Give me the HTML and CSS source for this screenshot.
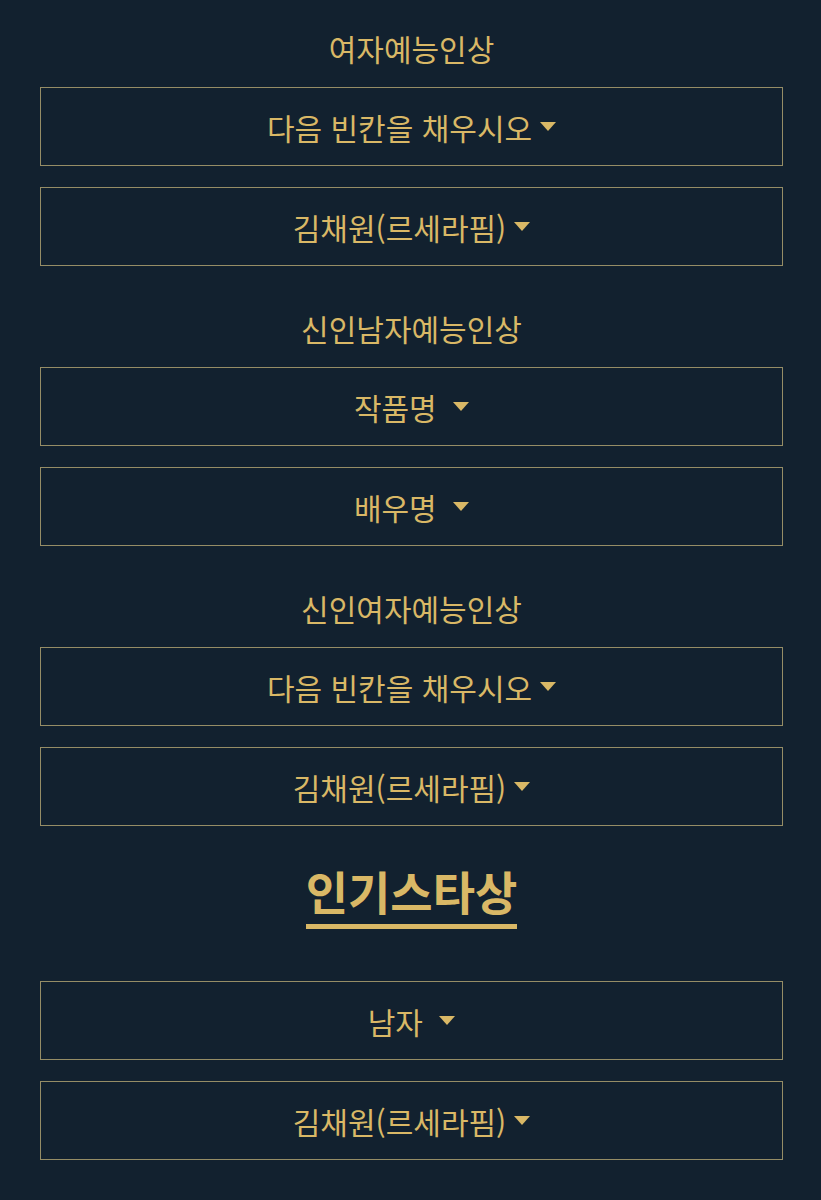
FILE: index.html
```html
<!DOCTYPE html>
<html lang="ko">
<head>
<meta charset="utf-8">
<link rel="stylesheet" href="styles.css">
</head>
<body>
<main class="page">
  <section class="group">
    <h3 class="label">여자예능인상</h3>
    <div class="select"><span class="val">다음 빈칸을 채우시오</span><span class="caret"></span></div>
    <div class="select"><span class="val">김채원(르세라핌)</span><span class="caret"></span></div>
  </section>
  <section class="group">
    <h3 class="label">신인남자예능인상</h3>
    <div class="select"><span class="val">작품명&nbsp;</span><span class="caret"></span></div>
    <div class="select"><span class="val">배우명&nbsp;</span><span class="caret"></span></div>
  </section>
  <section class="group">
    <h3 class="label">신인여자예능인상</h3>
    <div class="select"><span class="val">다음 빈칸을 채우시오</span><span class="caret"></span></div>
    <div class="select"><span class="val">김채원(르세라핌)</span><span class="caret"></span></div>
  </section>
  <section class="group">
    <h2 class="heading"><span class="ul">인기스타상</span></h2>
    <div class="select"><span class="val">남자&nbsp;</span><span class="caret"></span></div>
    <div class="select"><span class="val">김채원(르세라핌)</span><span class="caret"></span></div>
  </section>
</main>
</body>
</html>
```

FILE: styles.css
```css
html, body {
  margin: 0;
  padding: 0;
  background: #12212f;
}
body {
  font-family: "Noto Sans CJK KR", "Noto Sans", sans-serif;
  color: #d9b866;
}
.page {
  padding: 28px 38px 40px 40px;
}
.group {
  display: flex;
  flex-direction: column;
  gap: 21px;
  margin-bottom: 42px;
}
.label {
  margin: 0 0 -2px;
  font-size: 30px;
  font-weight: 400;
  line-height: 40px;
  text-align: center;
}
.select {
  height: 77px;
  border: 1px solid #958d66;
  display: flex;
  align-items: center;
  justify-content: center;
  font-size: 30px;
  line-height: 1;
}
.val {
  display: inline-block;
}
.caret {
  display: inline-block;
  width: 0;
  height: 0;
  margin-left: 8px;
  border-left: 8px solid transparent;
  border-right: 8px solid transparent;
  border-top: 9px solid #d9b866;
}
.heading {
  display: flex;
  justify-content: center;
  margin: 0 0 31px;
  font-size: 46px;
  font-weight: 700;
  line-height: 44px;
}
.ul {
  display: block;
  padding-bottom: 12px;
  border-bottom: 5px solid #d9b866;
}
```
